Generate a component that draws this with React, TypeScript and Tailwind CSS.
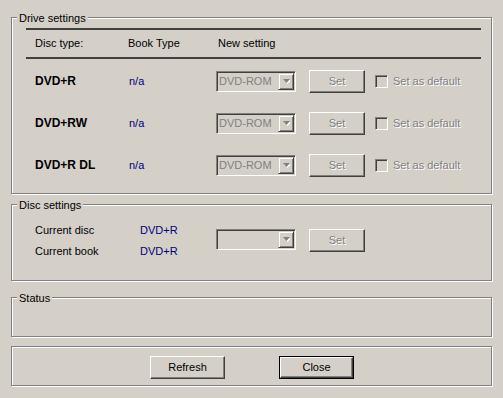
import React from "react";

const raised =
  "border border-t-white border-l-white border-b-[#404040] border-r-[#404040] shadow-[inset_-1px_-1px_0_#808080]";
const sunken =
  "border border-t-[#808080] border-l-[#808080] border-b-white border-r-white shadow-[inset_1px_1px_0_#404040,inset_-1px_-1px_0_#d4d0c8]";

function Group({
  title,
  className = "",
  children,
}: {
  title?: string;
  className?: string;
  children?: React.ReactNode;
}) {
  return (
    <div
      className={`relative w-[481px] border border-[#808080] shadow-[inset_1px_1px_0_#fff,1px_1px_0_#fff] ${className}`}
    >
      {title && (
        <span className="absolute left-[5px] top-[-6px] px-[2px] bg-[#d4d0c8] leading-[13px] whitespace-nowrap">
          {title}
        </span>
      )}
      {children}
    </div>
  );
}

function Combo({ text }: { text?: string }) {
  return (
    <div className={`w-[80px] h-[21px] p-[1px] bg-[#d4d0c8] flex ${sunken}`}>
      <span className="flex-1 pl-[1px] leading-[17px] text-[#808080] whitespace-nowrap overflow-hidden">
        {text}
      </span>
      <div
        className={`w-[16px] h-[17px] flex items-center justify-center border border-t-[#d4d0c8] border-l-[#d4d0c8] border-b-[#404040] border-r-[#404040] shadow-[inset_1px_1px_0_#fff,inset_-1px_-1px_0_#808080]`}
      >
        <svg width="7" height="5" viewBox="0 0 7 5">
          <path d="M0 0h7L3.5 4z" fill="#ffffff" transform="translate(1,1)" />
          <path d="M0 0h7L3.5 4z" fill="#808080" />
        </svg>
      </div>
    </div>
  );
}

function Button({
  label,
  width,
  disabled,
  isDefault,
}: {
  label: string;
  width: string;
  disabled?: boolean;
  isDefault?: boolean;
}) {
  const inner = (
    <div
      className={`h-full w-full flex items-center justify-center ${raised} ${
        disabled ? "text-[#808080] [text-shadow:1px_1px_0_#fff]" : "text-black"
      }`}
    >
      {label}
    </div>
  );
  if (isDefault) {
    return (
      <div className={`${width} h-[23px] border border-black`}>{inner}</div>
    );
  }
  return <div className={`${width} h-[23px]`}>{inner}</div>;
}

function Checkbox() {
  return <div className={`w-[13px] h-[13px] bg-[#d4d0c8] ${sunken}`} />;
}

function DriveRow({ label }: { label: string }) {
  return (
    <div className="flex items-center h-[42px] pl-[23px]">
      <div className="w-[94px] font-bold text-[12px] whitespace-nowrap">{label}</div>
      <div className="w-[87px] text-[#000080]">n/a</div>
      <Combo text="DVD-ROM" />
      <div className="ml-[13px]">
        <Button label="Set" width="w-[56px]" disabled />
      </div>
      <div className="ml-[10px]">
        <Checkbox />
      </div>
      <span className="ml-[5px] text-[#808080] [text-shadow:1px_1px_0_#fff] whitespace-nowrap">
        Set as default
      </span>
    </div>
  );
}

export default function App() {
  return (
    <div className="w-[503px] h-[398px] bg-[#d4d0c8] pt-[17px] pl-[11px] text-[11px] text-black font-['Liberation_Sans',Arial,sans-serif] overflow-hidden">
      <Group title="Drive settings" className="h-[177px]">
        <div className="ml-[14px] mt-[10px] w-[455px] h-[2px] bg-[#404040]" />
        <div className="flex items-center h-[27px] pl-[23px]">
          <div className="w-[93px]">Disc type:</div>
          <div className="w-[90px]">Book Type</div>
          <div>New setting</div>
        </div>
        <div className="ml-[14px] w-[455px] h-[2px] bg-[#404040]" />
        <div className="mt-[1px]">
          <DriveRow label="DVD+R" />
          <DriveRow label="DVD+RW" />
          <DriveRow label="DVD+R DL" />
        </div>
      </Group>

      <Group title="Disc settings" className="h-[77px] mt-[10px]">
        <div className="flex items-start pl-[23px]">
          <div className="mt-[15px] leading-[21px]">
            <div className="flex">
              <div className="w-[105px]">Current disc</div>
              <div className="w-[76px] text-[#000080]">DVD+R</div>
            </div>
            <div className="flex">
              <div className="w-[105px]">Current book</div>
              <div className="w-[76px] text-[#000080]">DVD+R</div>
            </div>
          </div>
          <div className="mt-[24px] flex">
            <Combo />
            <div className="ml-[13px]">
              <Button label="Set" width="w-[56px]" disabled />
            </div>
          </div>
        </div>
      </Group>

      <Group title="Status" className="h-[40px] mt-[16px]" />

      <Group className="h-[40px] mt-[9px]">
        <div className="flex pl-[138px] pt-[9px]">
          <Button label="Refresh" width="w-[75px]" />
          <div className="ml-[54px]">
            <Button label="Close" width="w-[75px]" isDefault />
          </div>
        </div>
      </Group>
    </div>
  );
}
